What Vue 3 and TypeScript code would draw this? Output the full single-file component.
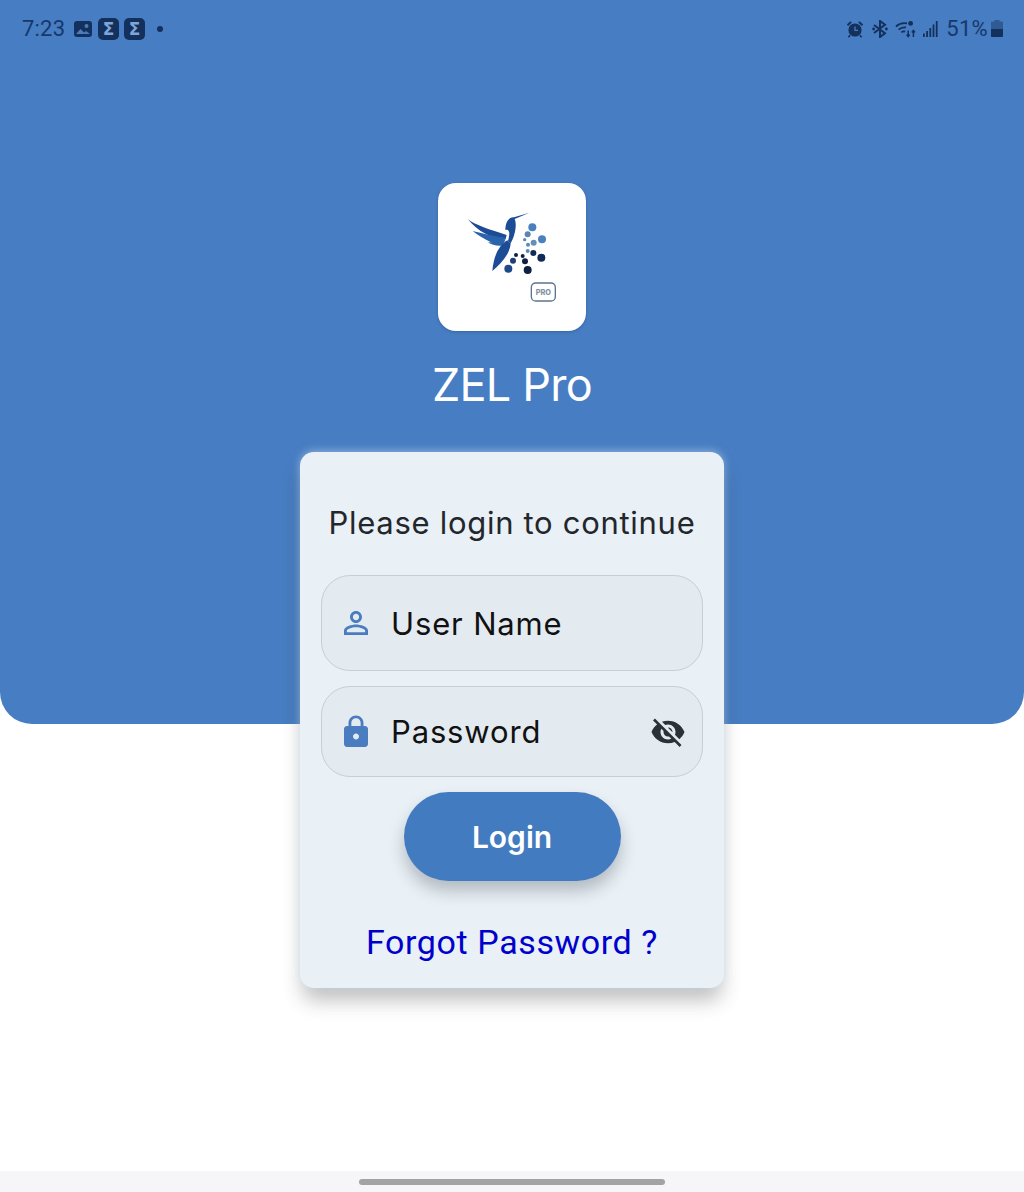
<template>
  <div class="page">
    <header class="hero">
      <div class="status">
        <div class="status-side">
          <span class="time">7:23</span>
          <svg class="ic-image" viewBox="0 0 18 16" aria-hidden="true">
            <rect width="18" height="16" rx="3" fill="#14305c" />
            <circle cx="12.5" cy="5" r="2" fill="#4a7dc0" />
            <path d="M2 13l4.5-5 3.5 3.5 2-1.5 4 3z" fill="#4a7dc0" />
          </svg>
          <span class="sigma">Σ</span>
          <span class="sigma">Σ</span>
          <span class="dot" />
        </div>
        <div class="status-side right">
          <svg class="ic-alarm" viewBox="0 0 18 18" aria-hidden="true">
            <circle cx="9" cy="10" r="6.6" fill="#14305c" />
            <path d="M0.8 4.6L4.4 1.2l1.4 1.4-3.6 3.4zM17.2 4.6L13.6 1.2l-1.4 1.4 3.6 3.4z" fill="#14305c" />
            <path d="M9 6.4V10.4h3" fill="none" stroke="#4a7dc0" stroke-width="1.3" />
            <path d="M4 15.2l-1.6 2M14 15.2l1.6 2" stroke="#14305c" stroke-width="1.6" />
          </svg>
          <svg class="ic-bt" viewBox="0 0 16 18" aria-hidden="true">
            <path
              d="M2 5l11 8.2L8 17V1l5 3.8L2 13"
              fill="none"
              stroke="#14305c"
              stroke-width="2"
            />
            <circle cx="1.600" cy="9" r="1.400" fill="#14305c" />
            <circle cx="14.400" cy="9" r="1.400" fill="#14305c" />
          </svg>
          <svg class="ic-wifi" viewBox="0 0 22 18" aria-hidden="true">
            <g fill="none" stroke="#14305c" stroke-width="1.800">
              <path d="M1 6.500C4 3.600 8 2.600 12 3.400" />
              <path d="M3.600 9.600C5.800 7.600 8.400 7 11 7.400" />
              <path d="M6.400 12.400C7.600 11.400 9 11.200 10.200 11.600" />
            </g>
            <circle cx="15.600" cy="3.400" r="2.400" fill="#14305c" />
            <path d="M13.200 10.400v6M11.600 14.600l1.600 2 1.600-2M18.400 17v-6.400M16.800 12.400l1.600-2 1.600 2" fill="none" stroke="#14305c" stroke-width="1.500" />
          </svg>
          <svg class="ic-signal" viewBox="0 0 15 16" aria-hidden="true">
            <g fill="#14305c">
              <rect x="0" y="12.500" width="1.800" height="3.500" />
              <rect x="3.200" y="10" width="1.800" height="6" />
              <rect x="6.400" y="7" width="1.800" height="9" />
              <rect x="9.600" y="3.500" width="1.800" height="12.500" />
              <rect x="12.800" y="0" width="1.800" height="16" />
            </g>
          </svg>
          <span class="pct">51%</span>
          <svg class="ic-batt" viewBox="0 0 12 17" aria-hidden="true">
            <path d="M3.500 0h5v1.500H11a1 1 0 0 1 1 1V16a1 1 0 0 1-1 1H1a1 1 0 0 1-1-1V2.500a1 1 0 0 1 1-1h2.500z" fill="#2f5a94" />
            <path d="M0 9h12v7a1 1 0 0 1-1 1H1a1 1 0 0 1-1-1z" fill="#14305c" />
          </svg>
        </div>
      </div>

      <div class="logo">
        <svg viewBox="24 24 444 444" class="logo-art" aria-hidden="true">
          <path d="M113 132C135 150 175 162 230 180L226 194C186 192 142 168 113 132z" fill="#1d4c96" />
          <path d="M128 168C150 172 190 186 228 188C216 208 196 210 180 200C163 192 145 182 128 168z" fill="#2a64ad" />
          <path d="M174 202C190 202 205 198 226 194L218 212C200 214 185 210 174 202z" fill="#2a64ad" />
          <path d="M187 288C190 250 203 213 232 196L242 205C240 237 212 267 187 288z" fill="#1d4c96" />
          <path d="M298 113L254 132C262 150 254 185 242 205L234 198C240 178 240 160 226 165C226 145 235 125 252 127z" fill="#1d4c96" />
          <circle v-for="c in dots" :key="c[0] + '-' + c[1]" :cx="c[0]" :cy="c[1]" :r="c[2]" :fill="c[3]" />
          <rect x="304" y="324" width="72" height="54" rx="13" fill="#fff" stroke="#5d7391" stroke-width="4" />
          <text x="340" y="359" class="pro">PRO</text>
        </svg>
      </div>

      <h1 class="title">ZEL Pro</h1>
    </header>

    <section class="card">
      <p class="lead">Please login to continue</p>

      <div class="field user">
        <svg class="field-icon" viewBox="0 0 24 24" aria-hidden="true">
          <path
            fill="#4a7dc0"
            d="M12 5.900c1.160 0 2.100.94 2.100 2.100s-.94 2.100-2.100 2.100S9.900 9.160 9.900 8s.94-2.100 2.100-2.100m0 9c2.970 0 6.100 1.460 6.100 2.100v1.100H5.900V17c0-.64 3.130-2.100 6.100-2.100M12 4C9.790 4 8 5.790 8 8s1.790 4 4 4 4-1.790 4-4-1.790-4-4-4zm0 9c-2.670 0-8 1.340-8 4v3h16v-3c0-2.660-5.330-4-8-4z"
          />
        </svg>
        <span class="field-label">User Name</span>
      </div>

      <div class="field pass">
        <svg class="field-icon" viewBox="0 0 24 24" aria-hidden="true">
          <path
            fill="#4a7dc0"
            d="M18 8h-1V6c0-2.760-2.240-5-5-5S7 3.240 7 6v2H6c-1.100 0-2 .9-2 2v10c0 1.100.9 2 2 2h12c1.100 0 2-.9 2-2V10c0-1.100-.9-2-2-2zm-6 9c-1.100 0-2-.9-2-2s.9-2 2-2 2 .9 2 2-.9 2-2 2zm3.100-9H8.900V6c0-1.710 1.390-3.100 3.100-3.100 1.710 0 3.100 1.390 3.100 3.100v2z"
          />
        </svg>
        <span class="field-label">Password</span>
        <svg class="eye" viewBox="0 0 24 24" aria-hidden="true">
          <path
            fill="#2b3138"
            d="M12 7c2.760 0 5 2.240 5 5 0 .65-.13 1.260-.36 1.830l2.920 2.920c1.510-1.260 2.700-2.890 3.430-4.750-1.730-4.390-6-7.500-11-7.500-1.400 0-2.740.25-3.980.7l2.160 2.160C10.740 7.130 11.350 7 12 7zM2 4.270l2.280 2.280.46.46C3.080 8.300 1.780 10.020 1 12c1.730 4.390 6 7.500 11 7.500 1.550 0 3.030-.3 4.380-.84l.42.42L19.730 22 21 20.730 3.270 3 2 4.270zM7.530 9.800l1.550 1.550c-.05.21-.08.43-.08.65 0 1.660 1.340 3 3 3 .22 0 .44-.03.65-.08l1.550 1.550c-.67.33-1.410.53-2.200.53-2.760 0-5-2.240-5-5 0-.79.2-1.530.53-2.200zm4.310-.78l3.150 3.150.02-.16c0-1.660-1.340-3-3-3l-.17.01z"
          />
        </svg>
      </div>

      <button class="login" type="button">Login</button>
      <a class="forgot">Forgot Password ?</a>
    </section>

    <div class="nav"><span class="pill" /></div>
  </div>
</template>

<script setup lang="ts">
type Dot = [number, number, number, string]

// logo dots, light ones on top and dark ones below
const dots: Dot[] = [
  [307, 157, 12, '#4a80bd'],
  [293, 178, 9, '#5686b4'],
  [336, 193, 12, '#4a80bd'],
  [311, 203, 9, '#6390bb'],
  [284, 194, 5, '#5a8ab5'],
  [294, 209, 6, '#5a8ab5'],
  [293, 228, 6, '#5a8ab5'],
  [310, 234, 9, '#122a55'],
  [334, 248, 12, '#122a55'],
  [278, 243, 6, '#102040'],
  [258, 240, 6, '#102040'],
  [249, 257, 9, '#1f3f75'],
  [285, 259, 9, '#102040'],
  [235, 281, 12, '#1f4a8a'],
  [293, 285, 12, '#102040'],
]
</script>

<style>
html,
body {
  margin: 0;
  background: #fff;
}
</style>

<style scoped>
.page {
  display: flex;
  flex-direction: column;
  height: 1192px;
  overflow: hidden;
  background: #fff;
  font-family: Inter, 'Liberation Sans', sans-serif;
}
.hero {
  display: flex;
  flex-direction: column;
  align-items: center;
  flex: none;
  height: 724px;
  background: #477dc2;
  border-radius: 0 0 32px 32px;
}
.status {
  display: flex;
  justify-content: space-between;
  align-items: center;
  align-self: stretch;
  box-sizing: border-box;
  height: 57px;
  padding: 0 21px 0 22px;
  color: #17386b;
}
.status-side {
  display: flex;
  align-items: center;
}
.time {
  width: 42px;
  margin-right: 10px;
  font: 400 22px Roboto, sans-serif;
  letter-spacing: 0.2px;
}
.ic-image {
  width: 18px;
  height: 16px;
  margin-right: 6px;
}
.sigma {
  display: flex;
  align-items: center;
  justify-content: center;
  width: 21px;
  height: 22px;
  margin-right: 5px;
  border-radius: 5px;
  background: #14305c;
  color: #7fa6d8;
  font: 700 17px 'DejaVu Sans', sans-serif;
}
.dot {
  width: 6px;
  height: 6px;
  margin-left: 7px;
  border-radius: 50%;
  background: #14305c;
}
.ic-alarm {
  width: 18px;
  height: 18px;
  margin-right: 8px;
}
.ic-bt {
  width: 16px;
  height: 18px;
  margin-right: 7px;
}
.ic-wifi {
  width: 22px;
  height: 18px;
  margin-right: 6px;
}
.ic-signal {
  width: 15px;
  height: 16px;
  margin-right: 8px;
}
.pct {
  margin-right: 3px;
  font: 400 22px Roboto, sans-serif;
  letter-spacing: 0.3px;
}
.ic-batt {
  width: 12px;
  height: 17px;
}
.logo {
  width: 148px;
  height: 148px;
  margin-top: 126px;
  border-radius: 18px;
  background: #fff;
  box-shadow: 0 1px 3px rgba(20, 50, 90, 0.3);
}
.logo-art {
  display: block;
  width: 148px;
  height: 148px;
}
.pro {
  font: 800 22px Inter, sans-serif;
  fill: #8392a6;
  text-anchor: middle;
}
.title {
  margin: 26px 0 0;
  color: #fff;
  font-size: 45px;
  font-weight: 400;
  letter-spacing: -0.8px;
  line-height: 56px;
}
.card {
  display: flex;
  flex-direction: column;
  align-items: center;
  flex: none;
  box-sizing: border-box;
  width: 424px;
  height: 536px;
  margin: -272px auto 0;
  padding: 47px 21px 0;
  border-radius: 14px;
  background: #e9f0f6;
  box-shadow: 0 -1px 9px rgba(205, 225, 245, 0.55), 0 15px 20px -3px rgba(40, 40, 40, 0.3);
}
.lead {
  margin: 0;
  color: #23272c;
  font-size: 31px;
  letter-spacing: 0.7px;
  line-height: 48px;
  white-space: nowrap;
}
.field {
  display: flex;
  align-items: center;
  align-self: stretch;
  box-sizing: border-box;
  padding: 0 16px;
  border: 1.5px solid #c6ced6;
  border-radius: 29px;
  background: #e3ebf1;
}
.user {
  height: 96px;
  margin-top: 28px;
}
.pass {
  height: 91px;
  margin-top: 15px;
}
.field-icon {
  flex: none;
  width: 36px;
  height: 36px;
}
.field-label {
  margin-left: 17px;
  color: #111;
  font-size: 31px;
  letter-spacing: 0.85px;
}
.eye {
  width: 36px;
  height: 36px;
  margin-left: auto;
}
.login {
  width: 217px;
  height: 89px;
  margin-top: 15px;
  padding: 0;
  border: 0;
  border-radius: 45px;
  background: #437bc0;
  color: #fff;
  font: 600 30px Inter, sans-serif;
  box-shadow: 0 10px 16px rgba(40, 50, 60, 0.28);
}
.forgot {
  margin-top: 41px;
  color: #0000cd;
  font: 400 34px Roboto, sans-serif;
  letter-spacing: 0.6px;
}
.nav {
  display: flex;
  justify-content: center;
  align-items: center;
  flex: none;
  height: 21px;
  margin-top: auto;
  background: #f6f6f9;
}
.pill {
  width: 306px;
  height: 6px;
  border-radius: 3px;
  background: #a3a3a3;
}
</style>
